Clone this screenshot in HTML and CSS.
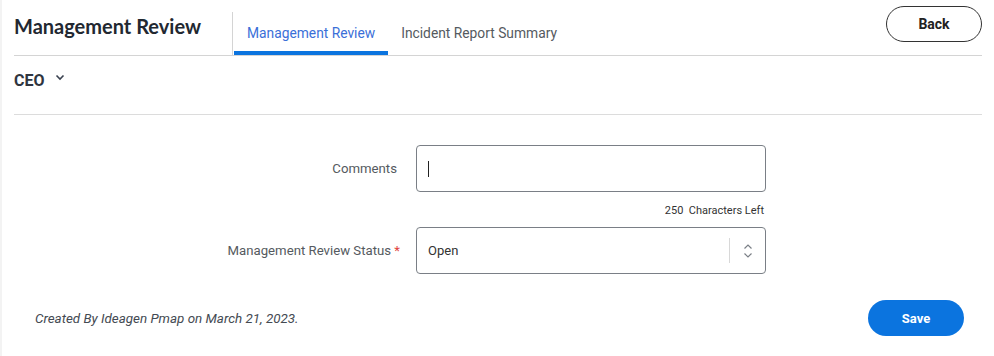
FILE: index.html
```html
<!DOCTYPE html>
<html>
<head>
<meta charset="utf-8">
<link rel="stylesheet" href="styles.css">
</head>
<body>
<div class="page">
  <header class="header">
    <h1 class="title">Management Review</h1>
    <nav class="tabs">
      <a class="tab active">Management Review</a>
      <a class="tab">Incident Report Summary</a>
    </nav>
    <button class="btn-back">Back</button>
  </header>
  <section class="role">
    <span class="role-name">CEO</span>
    <svg class="chev" width="10" height="7" viewBox="0 0 10 7"><path d="M1.5 1.5 L5 5 L8.5 1.5" fill="none" stroke="#3a4250" stroke-width="1.6"/></svg>
  </section>
  <form class="form">
    <label class="label">Comments</label>
    <div class="input"><span class="caret"></span></div>
    <div></div>
    <div class="counter">250&nbsp; Characters Left</div>
    <label class="label">Management Review Status <span class="req">*</span></label>
    <div class="input select">
      <span class="value">Open</span>
      <span class="sep"></span>
      <svg class="updown" width="10" height="16" viewBox="0 0 10 16"><path d="M1.5 5.5 L5 2 L8.5 5.5 M1.5 10.5 L5 14 L8.5 10.5" fill="none" stroke="#7a7f86" stroke-width="1.2"/></svg>
    </div>
  </form>
  <footer class="footer">
    <span class="created">Created By Ideagen Pmap on March 21, 2023.</span>
    <button class="btn-save">Save</button>
  </footer>
</div>
</body>
</html>
```
FILE: styles.css
```css
html, body { margin: 0; padding: 0; background: #fff; }
body { font-family: Roboto, "Noto Sans", Arial, sans-serif; color: #333; }
.page {
  border-left: 2px solid #f3f3f3;
  min-height: 356px;
  box-sizing: border-box;
  padding: 0 12px 0 12px;
}
.header {
  display: flex;
  align-items: flex-start;
  height: 55px;
  border-bottom: 1px solid #d4d4d4;
}
.title {
  margin: 13px 0 0 0;
  font-family: Lato, sans-serif;
  font-weight: 700;
  font-size: 20px;
  line-height: 26px;
  color: #222831;
  width: 218px;
}
.tabs {
  display: flex;
  margin-top: 12px;
  height: 43px;
  border-left: 1px solid #d4d4d4;
  padding-left: 1px;
}
.tab {
  display: block;
  padding: 13px 13px 0;
  font-size: 13.8px;
  line-height: 16px;
  color: #555a60;
  height: 43px;
  box-sizing: border-box;
}
.tab.active {
  color: #3a6fd8;
  border-bottom: 4px solid #0b74df;
  border-radius: 3px 3px 0 0;
}
.btn-back {
  margin: 6px 0 0 auto;
  width: 96px;
  height: 36px;
  border: 1px solid #333;
  border-radius: 18px;
  background: #fff;
  font-family: Roboto, sans-serif;
  font-weight: 700;
  font-size: 14px;
  color: #222;
}
.role {
  display: flex;
  align-items: center;
  height: 59px;
  border-bottom: 1px solid #dcdcdc;
  padding-bottom: 14px;
  box-sizing: border-box;
}
.role-name {
  font-weight: 700;
  font-size: 16px;
  color: #2f3540;
  margin-top: 4px;
}
.chev { margin-left: 10px; margin-bottom: 2px; }
.form {
  display: grid;
  grid-template-columns: 383px 350px;
  column-gap: 19px;
  align-items: center;
  margin-top: 30px;
}
.label {
  text-align: right;
  font-size: 13.2px;
  color: #555a60;
}
.req { color: #e0443e; margin-right: -3px; }
.input {
  height: 47px;
  box-sizing: border-box;
  border: 1px solid #7a7f86;
  border-radius: 4px;
  display: flex;
  align-items: center;
  padding-left: 11px;
}
.caret { width: 1px; height: 16px; background: #222; }
.counter {
  text-align: right;
  font-size: 11px;
  color: #333;
  padding: 12px 2px 9px 0;
  line-height: 14px;
}
.value { font-size: 13px; color: #333; flex: 1; }
.sep { width: 1px; height: 25px; background: #d8d8d8; }
.updown { margin: 0 12px 0 13px; }
.footer {
  display: flex;
  align-items: center;
  justify-content: space-between;
  margin-top: 26px;
  padding: 0 18px 0 21px;
}
.created { font-style: italic; font-size: 13.4px; color: #444a52; }
.btn-save {
  width: 96px;
  height: 36px;
  border: none;
  border-radius: 18px;
  background: #0b74df;
  color: #fff;
  font-family: Roboto, sans-serif;
  font-weight: 700;
  font-size: 13px;
}
```
